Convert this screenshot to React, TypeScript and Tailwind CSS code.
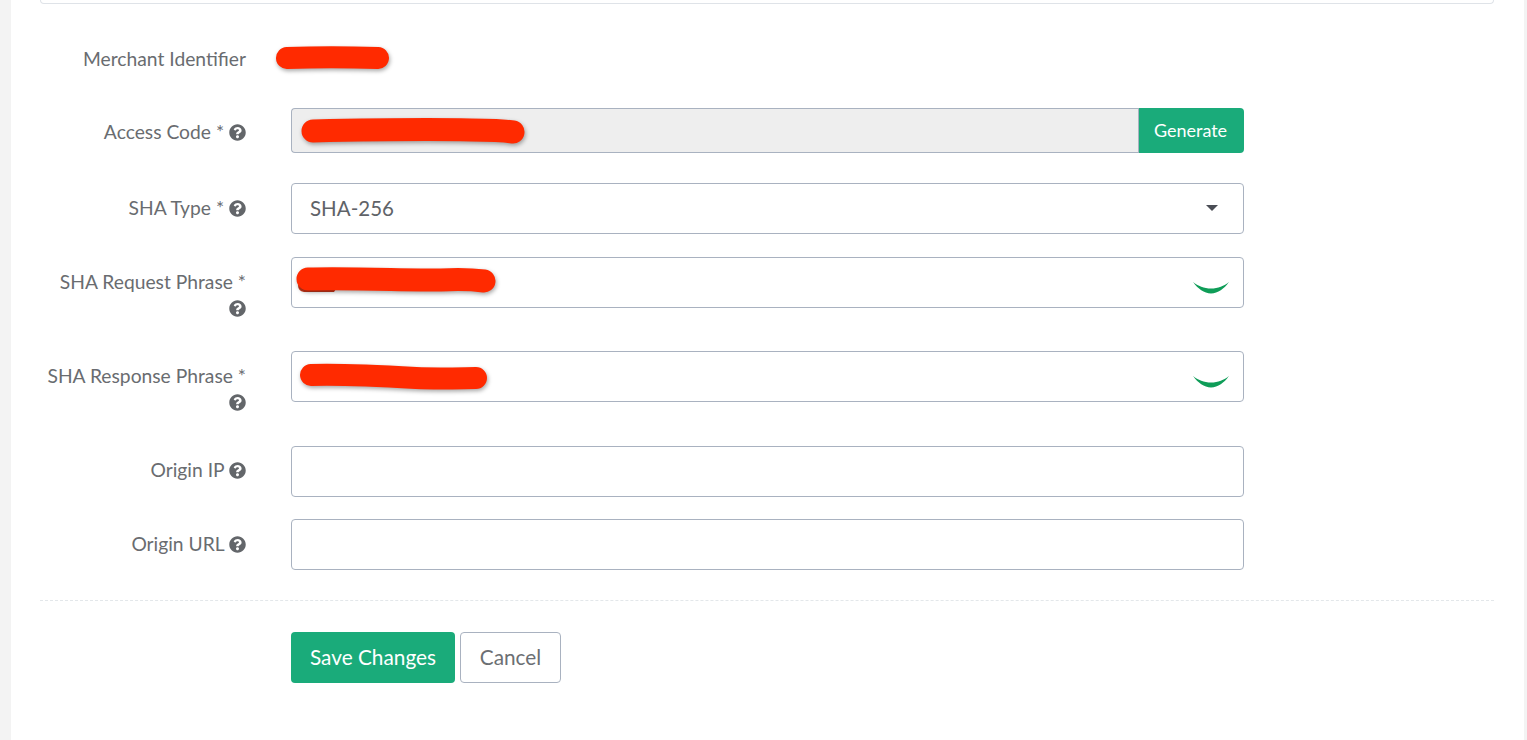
import type { ReactNode } from "react";
import { FaQuestionCircle } from "react-icons/fa";

const inputBox = "h-[51px] w-[953px] rounded-[4px] border border-[#a9b2c0] bg-white";

function Help() {
  return <FaQuestionCircle className="inline-block h-[17px] w-[17px] align-[-2px] text-[#63666a]" />;
}

function Spinner() {
  return (
    <svg viewBox="0 0 38 12" className="absolute right-[14px] top-[25px] h-[12px] w-[38px]">
      <path d="M1 0C6 7 12 11 19 11.5C26 11 32 7 37 0C32 4 26 6.5 19 6.5C12 6.5 6 4 1 0Z" fill="#0f9d58" />
    </svg>
  );
}

// red marker strokes that hide the values in the reference
function Scribble({ d, className, width }: { d: string; className: string; width: number }) {
  return (
    <svg
      viewBox="0 0 240 40"
      className={`absolute h-[40px] w-[240px] overflow-visible drop-shadow-[1px_2px_2px_rgba(0,0,0,0.35)] ${className}`}
    >
      <path d={d} fill="none" stroke="#ff2a00" strokeWidth={width} strokeLinecap="round" strokeLinejoin="round" />
    </svg>
  );
}

function Field({ label, top = "pt-[12px]", className, children }: { label: ReactNode; top?: string; className: string; children: ReactNode }) {
  return (
    <div className={`flex gap-[45px] ${className}`}>
      <label className={`w-[206px] shrink-0 text-right text-[19.25px] leading-[26px] text-[#696c70] ${top}`}>{label}</label>
      <div className="relative">{children}</div>
    </div>
  );
}

export default function App() {
  return (
    <div className="h-[740px] overflow-hidden bg-[#f3f3f3] pl-[11px] pr-[3px] font-['Lato',sans-serif]">
      <div className="h-full bg-white pl-[29px] pr-[30px]">
        <div className="h-[4px] rounded-b-lg border border-t-0 border-[#dfe3e8]" />

        <form className="pt-[42px]">
          <Field label="Merchant Identifier" top="pt-0" className="mb-[36px] h-[26px]">
            <Scribble d="M-4 12C25 11 55 11 87 12" width={22} className="left-0 top-0" />
          </Field>

          <Field label={<>Access Code * <Help /></>} top="pt-[11px]" className="mb-[30px]">
            <div className="flex h-[45px] w-[953px]">
              <div className="flex-1 rounded-l-[4px] border border-r-0 border-[#a9b2c0] bg-[#eeeeee]" />
              <button type="button" className="w-[106px] rounded-r-[4px] border-l border-[#a9b2c0] bg-[#1aab7a] pb-[1px] pr-[2px] text-[18px] text-white">
                Generate
              </button>
            </div>
            <Scribble d="M22 23C70 22 130 21 180 22C200 22 215 23 222 24" width={23} className="left-0 top-0" />
          </Field>

          <Field label={<>SHA Type * <Help /></>} className="mb-[23px]">
            <div className={`${inputBox} flex items-center justify-between pb-[1px] pl-[18px] pr-[25px] text-[20.5px] text-[#5f6368]`}>
              SHA-256
              <span className="h-0 w-0 border-x-[6px] border-t-[6px] border-x-transparent border-t-[#4a4d55]" />
            </div>
          </Field>

          <Field label={<>SHA Request Phrase * <br /><Help /></>} className="mb-[30px]">
            <div className={inputBox} />
            <svg viewBox="0 0 40 10" className="absolute left-[7px] top-[26px] h-[10px] w-[40px]">
              <path d="M0 2L38 6L36 9L6 9Q0 8 0 2Z" fill="#c8361a" />
            </svg>
            <Scribble d="M17 22C60 21 110 23 150 23C170 22 185 23 193 24" width={23} className="left-0 top-0" />
            <Spinner />
          </Field>

          <Field label={<>SHA Response Phrase * <br /><Help /></>} className="mb-[31px]">
            <div className={inputBox} />
            <Scribble d="M20 24C50 23 90 25 125 27C150 28 175 27 185 27" width={22} className="left-0 top-0" />
            <Spinner />
          </Field>

          <Field label={<>Origin IP <Help /></>} top="pt-[11px]" className="mb-[22px]">
            <div className={inputBox} />
          </Field>

          <Field label={<>Origin URL <Help /></>} className="mb-[30px]">
            <div className={inputBox} />
          </Field>
        </form>

        <div className="border-t border-dashed border-[#e3e7ea]" />

        <div className="ml-[251px] mt-[31px] flex gap-[5px]">
          <button type="button" className="h-[51px] w-[164px] rounded-[4px] bg-[#1aab7a] pb-[2px] text-[20.8px] text-white">
            Save Changes
          </button>
          <button type="button" className="h-[51px] w-[101px] rounded-[4px] border border-[#a9b2c0] bg-white pb-[2px] text-[20.8px] text-[#6c6f73]">
            Cancel
          </button>
        </div>
      </div>
    </div>
  );
}
